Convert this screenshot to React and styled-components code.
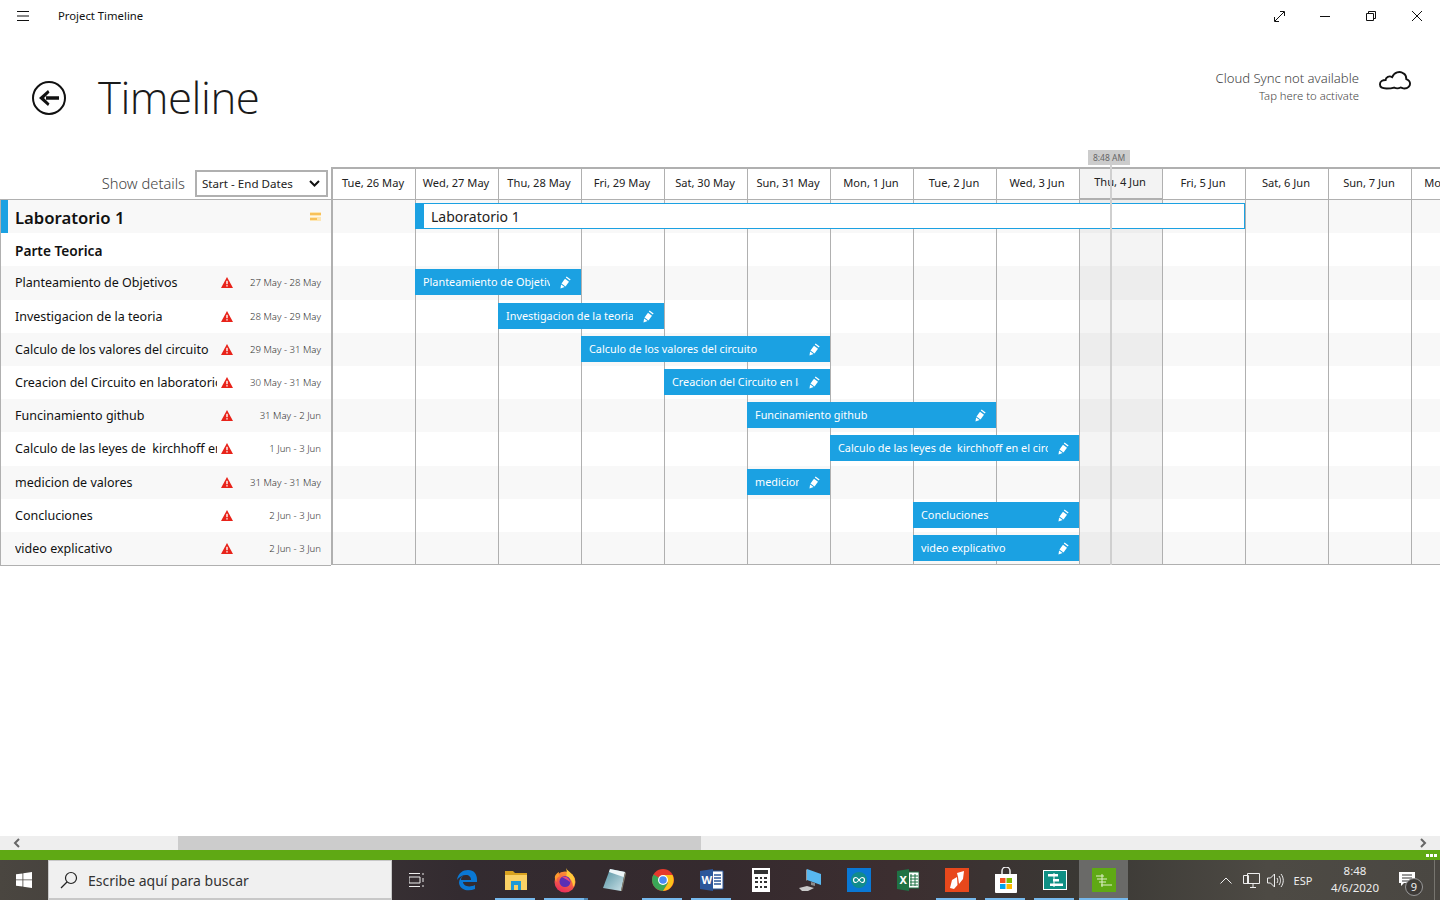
import React from "react";
import styled, { createGlobalStyle } from "styled-components";

const GlobalStyle = createGlobalStyle`
  html, body {
    margin: 0;
    padding: 0;
    width: 1440px;
    height: 900px;
    overflow: hidden;
    background: #fff;
    font-family: "Noto Sans", "Open Sans", sans-serif;
    color: #111;
  }
  * { box-sizing: border-box; }
`;

const DAYS = [
  "Tue, 26 May", "Wed, 27 May", "Thu, 28 May", "Fri, 29 May", "Sat, 30 May", "Sun, 31 May", "Mon, 1 Jun",
  "Tue, 2 Jun", "Wed, 3 Jun", "Thu, 4 Jun", "Fri, 5 Jun", "Sat, 6 Jun", "Sun, 7 Jun", "Mon, 8 Jun",
];
const TODAY = 9;
const ROW_H = 33.2;

const TASKS = [
  { name: "Planteamiento de Objetivos", dates: "27 May - 28 May", start: 1, span: 2 },
  { name: "Investigacion de la teoria", dates: "28 May - 29 May", start: 2, span: 2 },
  { name: "Calculo de los valores del circuito", dates: "29 May - 31 May", start: 3, span: 3 },
  { name: "Creacion del Circuito en laboratorio", dates: "30 May - 31 May", start: 4, span: 2 },
  { name: "Funcinamiento github", dates: "31 May - 2 Jun", start: 5, span: 3 },
  { name: "Calculo de las leyes de  kirchhoff en el circuito", dates: "1 Jun - 3 Jun", start: 6, span: 3 },
  { name: "medicion de valores", dates: "31 May - 31 May", start: 5, span: 1 },
  { name: "Concluciones", dates: "2 Jun - 3 Jun", start: 7, span: 2 },
  { name: "video explicativo", dates: "2 Jun - 3 Jun", start: 7, span: 2 },
];

const Page = styled.div`
  width: 1440px;
  height: 900px;
  display: flex;
  flex-direction: column;
  overflow: hidden;
`;

const TitleBar = styled.div`
  height: 32px;
  flex: none;
  display: flex;
  align-items: center;
  padding-left: 17px;
`;

const AppName = styled.div`
  margin-left: 29px;
  margin-top: -1px;
  font-size: 11.3px;
  color: #111;
`;

const WindowButtons = styled.div`
  margin-left: auto;
  display: flex;
`;

const WindowButton = styled.div`
  width: 46px;
  height: 32px;
  display: flex;
  align-items: center;
  justify-content: center;
`;

const Header = styled.div`
  height: 118px;
  flex: none;
  display: flex;
  align-items: flex-start;
  padding: 31px 29px 0 32px;
`;

const Title = styled.h1`
  margin: 0 0 0 32px;
  font-family: "Open Sans", sans-serif;
  font-weight: 300;
  font-size: 43.8px;
  line-height: 68px;
  color: #1a1a1a;
  letter-spacing: -0.5px;
`;

const Sync = styled.div`
  margin-left: auto;
  margin-top: 5px;
  display: flex;
  align-items: flex-start;
  gap: 20px;
`;

const SyncText = styled.div`
  text-align: right;
  font-weight: 300;
  color: #444;
  font-size: 13.1px;
  line-height: 20px;

  small {
    display: block;
    font-size: 11.3px;
    line-height: 16px;
  }
`;

const Gantt = styled.div`
  position: relative;
  display: flex;
  flex: none;
  height: 415px;
`;

const Side = styled.div`
  width: 331px;
  flex: none;
`;

const SideHead = styled.div`
  height: 50px;
  display: flex;
  align-items: flex-end;
  justify-content: flex-end;
  padding: 0 3px 2px 0;
  gap: 10px;
  border-bottom: 1px solid #b0b0b0;
`;

const ShowLabel = styled.div`
  font-size: 14.7px;
  font-weight: 300;
  color: #444;
  line-height: 26px;
  margin-bottom: 1px;
`;

const Select = styled.div`
  width: 133px;
  height: 27px;
  border: 2px solid #b0b0b0;
  display: flex;
  align-items: center;
  justify-content: space-between;
  padding: 0 6px 0 5px;
  font-size: 11.6px;
  color: #222;
`;

const SideRows = styled.div`
  border-left: 1px solid #b0b0b0;
  border-bottom: 1px solid #b0b0b0;
`;

const SideRow = styled.div`
  height: ${ROW_H}px;
  display: flex;
  align-items: center;
  padding-left: 14px;
  padding-right: 10px;
  background: ${(p) => (p.$shade ? "#f8f8f8" : "#fff")};
  border-left: ${(p) => (p.$accent ? "7px solid #1ba1e2" : "none")};
`;

const ProjectName = styled.div`
  font-size: 16.7px;
  font-weight: 600;
  flex: 1;
  margin-left: -7px;
  padding-top: 1px;
`;

const GroupName = styled.div`
  font-size: 13.7px;
  font-weight: 600;
  padding-top: 2px;
`;

const TaskName = styled.div`
  width: 202px;
  flex: none;
  font-size: 12.5px;
  white-space: pre;
  overflow: hidden;
`;

const Warn = styled.svg`
  width: 12px;
  height: 11px;
  flex: none;
  margin-left: 4px;
`;

const Dates = styled.div`
  flex: 1;
  text-align: right;
  font-size: 9.6px;
  font-weight: 300;
  color: #333;
  white-space: nowrap;
`;

const Timeline = styled.div`
  flex: 1;
  min-width: 0;
  overflow: hidden;
  margin-top: 17px;
`;

const Track = styled.div`
  width: 1163px;
  border-left: 1px solid #b0b0b0;
`;

const Columns = styled.div`
  display: grid;
  grid-template-columns: repeat(14, 83px);
  height: ${(p) => p.$height || ROW_H}px;
  background: ${(p) => (p.$shade ? "#f8f8f8" : "transparent")};
  border-bottom: ${(p) => (p.$last ? "1px solid #b0b0b0" : "none")};
`;

const HeadCell = styled.div`
  grid-row: 1;
  border-top: 2px solid #b0b0b0;
  border-left: 1px solid #b0b0b0;
  border-bottom: ${(p) => (p.$today ? "2px" : "1px")} solid #b0b0b0;
  background: ${(p) => (p.$today ? "#f3f3f3" : "#fff")};
  display: flex;
  align-items: center;
  justify-content: center;
  font-size: 11.1px;
  white-space: nowrap;
  overflow: hidden;
  color: #222;
  padding: 0 2px 4px 0;
`;

const Cell = styled.div`
  grid-row: 1;
  grid-column: ${(p) => p.$col};
  border-left: 1px solid #b0b0b0;
  background: ${(p) => (p.$today ? "rgba(0,0,0,0.045)" : "transparent")};
`;

const Bar = styled.div`
  grid-row: 1;
  grid-column: ${(p) => p.$start + 1} / span ${(p) => p.$span};
  z-index: 1;
  align-self: start;
  height: 26px;
  margin-top: 3px;
  background: #1ba1e2;
  color: #fff;
  font-size: 10.85px;
  display: flex;
  align-items: center;
  padding: 0 9px 0 8px;
  gap: 10px;
`;

const BarText = styled.div`
  flex: 1;
  overflow: hidden;
  white-space: pre;
  min-width: 0;
  margin-top: -1px;
`;

const SummaryBar = styled.div`
  grid-row: 1;
  grid-column: 2 / span 10;
  z-index: 1;
  align-self: start;
  margin-top: 3px;
  height: 26px;
  border: 1px solid #1ba1e2;
  border-left: 9px solid #1ba1e2;
  background: #fff;
  font-size: 14px;
  line-height: 25px;
  padding-left: 7px;
  color: #222;
`;

const NowTag = styled.div`
  position: absolute;
  left: 1088px;
  top: 0;
  width: 42px;
  height: 15px;
  background: #cccccc;
  color: #666;
  font-size: 8.5px;
  line-height: 15px;
  text-align: center;
`;

const NowLine = styled.div`
  position: absolute;
  left: 1110px;
  top: 15px;
  bottom: 0;
  width: 2px;
  background: #cfcfcf;
  z-index: 2;
`;

const Spacer = styled.div`
  flex: 1;
`;

const ScrollBar = styled.div`
  height: 14px;
  flex: none;
  background: #eeeeee;
  display: flex;
  align-items: center;
  padding: 0 12px;
`;

const ScrollThumb = styled.div`
  width: 523px;
  height: 14px;
  margin-left: 156px;
  background: #cccccc;
`;

const Arrow = styled.svg`
  width: 10px;
  height: 10px;
  flex: none;
`;

const GreenStrip = styled.div`
  height: 10px;
  flex: none;
  background: #5fa914;
  display: flex;
  justify-content: flex-end;
  align-items: center;
  padding-right: 3px;
  gap: 1px;
`;

const Dot = styled.span`
  width: 3px;
  height: 3px;
  background: #fff;
`;

const Taskbar = styled.div`
  height: 40px;
  flex: none;
  display: flex;
  align-items: stretch;
  background: linear-gradient(90deg, #4a4640 0%, #332b30 32%, #352a2e 50%, #3c2e30 62%, #3a3834 75%, #4d4a44 88%, #4a4742 100%);
  color: #eee;
`;

const StartButton = styled.div`
  width: 48px;
  flex: none;
  display: flex;
  align-items: center;
  justify-content: center;
`;

const SearchBox = styled.div`
  width: 344px;
  flex: none;
  background: #f0f0f0;
  border: 1px solid #c8c8c8;
  border-width: 1px 1px 2px 1px;
  display: flex;
  align-items: center;
  gap: 10px;
  padding-left: 11px;
  color: #333;
  font-size: 14px;
`;

const SearchLabel = styled.span`
  padding-top: 2px;
`;

const TaskIcons = styled.div`
  display: flex;
  margin-left: 1px;
`;

const TaskIcon = styled.div`
  position: relative;
  width: 49px;
  display: flex;
  align-items: center;
  justify-content: center;
  background: ${(p) => (p.$active ? "#6a6a68" : "transparent")};

  &::after {
    content: "";
    display: ${(p) => (p.$open ? "block" : "none")};
    position: absolute;
    bottom: 0;
    left: ${(p) => (p.$active ? "0" : "4px")};
    width: ${(p) => (p.$active ? "100%" : p.$stacked ? "44px" : "40px")};
    height: 2px;
    background: ${(p) =>
      p.$stacked ? "linear-gradient(90deg, #76b9ed 90%, #4d86b3 90%)" : "#76b9ed"};
  }
`;

const Tray = styled.div`
  margin-left: auto;
  display: flex;
  align-items: center;
  font-size: 11px;
  color: #eee;
`;

const TrayIcon = styled.div`
  display: flex;
  align-items: center;
  justify-content: center;
  width: ${(p) => p.$w}px;
`;

const Clock = styled.div`
  width: 70px;
  margin-top: -2px;
  text-align: center;
  font-size: 11.5px;
  line-height: 17.5px;
  white-space: nowrap;
`;

const Notify = styled.div`
  position: relative;
  width: 50px;
  align-self: stretch;
  padding: 12px 0 0 9px;

  &::after {
    content: "";
    position: absolute;
    top: 0;
    bottom: 0;
    right: 5px;
    width: 1px;
    background: #77756f;
  }
`;

const Badge = styled.div`
  position: absolute;
  left: 15px;
  top: 18px;
  width: 18px;
  height: 18px;
  border-radius: 50%;
  border: 1px solid #999;
  background: #3d3a37;
  font-size: 11px;
  line-height: 16px;
  text-align: center;
  color: #eee;
`;

const Pencil = () => (
  <svg width="12" height="14" viewBox="0 0 12 14" style={{ flex: "none" }}>
    <path d="M1.500 8.500 5 3.700l4 3-3.500 4.800z" fill="#fff" />
    <path d="M5.800 2.500 6.600 1.500l4 3-.8 1z" fill="#fff" />
    <path d="M1.100 9.500 4.600 12 .5 13.500z" fill="#fff" />
  </svg>
);

const WarnIcon = () => (
  <Warn viewBox="0 0 12 11">
    <path d="M6 0 12 11H0z" fill="#e8231a" />
    <rect x="5.300" y="3.800" width="1.400" height="3.400" fill="#fff" />
    <rect x="5.300" y="8.200" width="1.400" height="1.300" fill="#fff" />
  </Warn>
);

const Icons = {
  cortana: (
    <svg width="18" height="16" viewBox="2 0 18 16" fill="none" stroke="#eee" strokeWidth="1">
      <path d="M2 1.500h11M2 14.500h11M2 5h11v6H2zM16 1v2M16 6v4M16 13v2" />
    </svg>
  ),
  edge: (
    <svg width="22" height="22" viewBox="0 0 22 22">
      <path d="M1 11C2 4 7 1 12 1c6 0 9 4 9 10v2H7c.3 4 6 6 12 3v4c-7 3-15 1-16-6 0-3 1.500-6 5-8-2 1.500-3 3-3 5h10c0-3-2-5-5-5-4 0-7 2-9 5z" fill="#0a78d4" />
    </svg>
  ),
  folder: (
    <svg width="22" height="20" viewBox="0 0 22 20">
      <path d="M0 1h8l2 2h12v3H0z" fill="#d9a21f" />
      <path d="M0 5h22v15H0z" fill="#fad165" />
      <path d="M6 11h10v9H6z" fill="#1f9ad6" />
      <path d="M9 15h4v5H9z" fill="#fad165" />
    </svg>
  ),
  firefox: (
    <svg width="24" height="25" viewBox="0 0 24 25">
      <defs>
        <linearGradient id="fx" x1="0.700" y1="0" x2="0.300" y2="1">
          <stop offset="0" stopColor="#ff9a2e" />
          <stop offset="1" stopColor="#e8285f" />
        </linearGradient>
      </defs>
      <circle cx="12" cy="14" r="10.500" fill="url(#fx)" />
      <path d="M13 0c2 4 9 6 9 14 0 2-1 4-2 5 0-5-2-9-7-10 1-3 1-6 0-9z" fill="#ffc93a" />
      <path d="M2 8c1-2 2-3 4-4-.5 2 0 3 1 4-3 1-4 3-3.500 6C2 12 1.500 10 2 8z" fill="#ff9a2e" />
      <circle cx="12" cy="13.500" r="5.500" fill="#5a2fb5" />
      <path d="M9 9c4-1 8 1 8 5-2-2-5-3-8-5z" fill="#e9457f" />
    </svg>
  ),
  notes: (
    <svg width="24" height="24" viewBox="0 0 24 24">
      <defs>
        <linearGradient id="nt" x1="0" y1="0" x2="1" y2="1">
          <stop offset="0" stopColor="#4f8f9f" />
          <stop offset="1" stopColor="#cfe4ea" />
        </linearGradient>
      </defs>
      <path d="M8 1l15 3-4 19L1 20z" fill="url(#nt)" />
      <path d="M8 1l15 3-1.500 5L7 4z" fill="#eef6f8" />
      <path d="M23 4l-4 19 1 0 4-18z" fill="#8a8474" />
    </svg>
  ),
  chrome: (
    <svg width="22" height="24" viewBox="0 0 22 22">
      <circle cx="11" cy="11" r="11" fill="#e5392d" />
      <path d="M11 11 1.500 5.500A11 11 0 0 0 11 22l5-8z" fill="#3aa757" />
      <path d="M11 6h9.500A11 11 0 0 1 11 22l5-8z" fill="#fbc21a" />
      <circle cx="11" cy="11" r="5" fill="#fff" />
      <circle cx="11" cy="11" r="3.800" fill="#4a8af4" />
    </svg>
  ),
  word: (
    <svg width="24" height="22" viewBox="0 0 24 22">
      <path d="M8 2h15v18H8z" fill="#fff" stroke="#2b579a" />
      <path d="M14 6h7M14 9h7M14 12h7M14 15h7" stroke="#2b579a" strokeWidth="1.500" />
      <path d="M0 2l13-2v22L0 20z" fill="#2b579a" />
      <text x="1.500" y="15" fontSize="11" fontWeight="700" fill="#fff" fontFamily="Noto Sans">W</text>
    </svg>
  ),
  calc: (
    <svg width="18" height="24" viewBox="0 0 18 24">
      <path d="M0 0h18v24H0z" fill="#fff" />
      <path d="M2 2h14v4H2z" fill="#333" />
      <path d="M3 9h3v2H3zM8 9h2v2H8zM12 9h3v2h-3zM3 13h3v2H3zM8 13h2v2H8zM12 13h3v2h-3zM3 18h3v2H3zM8 18h2v2H8zM12 18h3v2h-3z" fill="#333" />
    </svg>
  ),
  pc: (
    <svg width="24" height="24" viewBox="0 0 24 24">
      <path d="M9 1l14 5v11L9 12z" fill="#58b8f0" />
      <path d="M9 1 8 2v11l1-1z" fill="#9a9a9a" />
      <path d="M13 14l4 1v3l-4-1z" fill="#8a8a8a" />
      <path d="M1 20l8-2 7 2-6 3H4z" fill="#c9c9c9" />
    </svg>
  ),
  arduino: (
    <svg width="24" height="24" viewBox="0 0 24 24">
      <path d="M0 0h24v24H0z" fill="#0a78d4" />
      <circle cx="12" cy="12" r="8" fill="#128c8c" />
      <path d="M9 9.500a2.500 2.500 0 1 0 0 5c2 0 4-5 6-5a2.500 2.500 0 1 1 0 5c-2 0-4-5-6-5z" fill="none" stroke="#fff" strokeWidth="1.200" />
    </svg>
  ),
  excel: (
    <svg width="22" height="22" viewBox="0 0 22 22">
      <path d="M8 3h14v16H8z" fill="#fff" stroke="#1f7244" />
      <path d="M14 5v12M18 5v12M13 7h8M13 10h8M13 13h8M13 16h8" stroke="#1f7244" />
      <path d="M0 2l12-2v22L0 20z" fill="#1f7244" />
      <text x="2.500" y="15" fontSize="11" fontWeight="700" fill="#fff" fontFamily="Noto Sans">X</text>
    </svg>
  ),
  acrobat: (
    <svg width="24" height="24" viewBox="0 0 24 24">
      <path d="M0 0h24v24H0z" fill="#e8481c" />
      <path d="M5 20l2-8 5-3 .5 8-3.500 4z" fill="#fff" />
      <path d="M12 5l7-2-1 8-4 5-1-7z" fill="#fff" />
    </svg>
  ),
  store: (
    <svg width="24" height="26" viewBox="0 0 24 26">
      <path d="M8 7V4a4 4 0 0 1 8 0v3" fill="none" stroke="#eee" strokeWidth="1.500" />
      <path d="M1 7h22v18a1 1 0 0 1-1 1H2a1 1 0 0 1-1-1z" fill="#fff" />
      <path d="M6 11h5.500v5H6z" fill="#f25022" />
      <path d="M12.500 11H18v5h-5.500z" fill="#7fba00" />
      <path d="M6 17h5.500v5H6z" fill="#00a4ef" />
      <path d="M12.500 17H18v5h-5.500z" fill="#ffb900" />
    </svg>
  ),
  project: (
    <svg width="24" height="20" viewBox="0 0 24 20">
      <path d="M0 0h24v20H0z" fill="#fff" />
      <path d="M1 1h22v18H1z" fill="#0f8f84" />
      <path d="M5 4h10v2.500H5zM10 9h6v2.500h-6zM7 13.500h13V16H7z" fill="#fff" />
      <path d="M11 3v14" stroke="#fff" />
    </svg>
  ),
  timeline: (
    <svg width="24" height="24" viewBox="0 0 24 24">
      <path d="M0 0h24v24H0z" fill="#5fa914" />
      <path d="M4 8h8M5 11h10M7 14h7M9 17h11" stroke="#dff0c8" strokeWidth="1.200" />
      <path d="M10 6v13" stroke="#dff0c8" />
    </svg>
  ),
};

const TASK_ICONS = [
  { key: "cortana" },
  { key: "edge" },
  { key: "folder", open: true },
  { key: "firefox", open: true, stacked: true },
  { key: "notes" },
  { key: "chrome", open: true },
  { key: "word", open: true },
  { key: "calc" },
  { key: "pc" },
  { key: "arduino" },
  { key: "excel" },
  { key: "acrobat", open: true },
  { key: "store", open: true },
  { key: "project", open: true },
  { key: "timeline", open: true, active: true },
];

const DayCells = () =>
  DAYS.map((d, i) => <Cell key={d} $today={i === TODAY} $col={i + 1} />);

export default function App() {
  return (
    <Page>
      <GlobalStyle />
      <TitleBar>
        <svg width="12" height="10" viewBox="0 0 12 10" stroke="#111" strokeWidth="1">
          <path d="M0 .5h12M0 5h12M0 9.500h12" />
        </svg>
        <AppName>Project Timeline</AppName>
        <WindowButtons>
          <WindowButton>
            <svg width="11" height="11" viewBox="0 0 11 11" fill="none" stroke="#111">
              <path d="M1 10 10 1M6 .5h4.500V5M.5 6v4.500H5" />
            </svg>
          </WindowButton>
          <WindowButton>
            <svg width="10" height="1" viewBox="0 0 10 1"><path d="M0 0h10v1H0z" fill="#111" /></svg>
          </WindowButton>
          <WindowButton>
            <svg width="10" height="10" viewBox="0 0 10 10" fill="none" stroke="#111">
              <path d="M.5 2.500h7v7h-7zM2.500 2.500v-2h7v7h-2" />
            </svg>
          </WindowButton>
          <WindowButton>
            <svg width="10" height="10" viewBox="0 0 10 10" stroke="#111"><path d="M0 0l10 10M10 0 0 10" /></svg>
          </WindowButton>
        </WindowButtons>
      </TitleBar>

      <Header>
        <svg width="34" height="34" viewBox="0 0 34 34" style={{ marginTop: 18, flex: "none" }}>
          <circle cx="17" cy="17" r="16" fill="none" stroke="#111" strokeWidth="2" />
          <path d="M14 17h13" stroke="#111" strokeWidth="3.500" />
          <path d="M7 17l9-8 1.500 2.500L12 17l5.500 5.500L16 25z" fill="#111" />
        </svg>
        <Title>Timeline</Title>
        <Sync>
          <SyncText>
            Cloud Sync not available
            <small>Tap here to activate</small>
          </SyncText>
          <svg width="32" height="24" viewBox="0 0 34 24" fill="none" stroke="#111" strokeWidth="2">
            <path d="M8 21c-4 0-7-1.500-7-4.500S4 12 7 12c0-3 4-5 7-3 2-5 8-7 12-4 2 1 3 3 3 6 3 1 4 3 4 5s-2 5-6 5c-2 0-3-1-4-1-2 1-5 1-7 0-3 1-5 1-8 1z" />
          </svg>
        </Sync>
      </Header>

      <Gantt>
        <Side>
          <SideHead>
            <ShowLabel>Show details</ShowLabel>
            <Select>
              Start - End Dates
              <svg width="11" height="7" viewBox="0 0 11 7" fill="none" stroke="#111" strokeWidth="2"><path d="M1 1l4.500 4.500L10 1" /></svg>
            </Select>
          </SideHead>
          <SideRows>
            <SideRow $shade $accent>
              <ProjectName>Laboratorio 1</ProjectName>
              <svg width="11" height="9" viewBox="0 0 11 9">
                <path d="M0 0h11v9H0z" fill="#fde6b4" />
                <path d="M0 1h11v2H0z" fill="#f8c15a" />
                <path d="M0 4h11v1H0z" fill="#fff7e6" />
                <path d="M0 6h7v2H0z" fill="#f8c15a" />
              </svg>
            </SideRow>
            <SideRow><GroupName>Parte Teorica</GroupName></SideRow>
            {TASKS.map((t, i) => (
              <SideRow key={t.name} $shade={i % 2 === 0}>
                <TaskName>{t.name}</TaskName>
                <WarnIcon />
                <Dates>{t.dates}</Dates>
              </SideRow>
            ))}
          </SideRows>
        </Side>
        <Timeline>
          <Track>
            <Columns $height={33}>
              {DAYS.map((d, i) => (
                <HeadCell key={d} $today={i === TODAY}>{d}</HeadCell>
              ))}
            </Columns>
            <Columns $shade>
              <DayCells />
              <SummaryBar>Laboratorio 1</SummaryBar>
            </Columns>
            <Columns>
              <DayCells />
            </Columns>
            {TASKS.map((t, i) => (
              <Columns key={t.name} $shade={i % 2 === 0} $last={i === TASKS.length - 1}>
                <DayCells />
                <Bar $start={t.start} $span={t.span}>
                  <BarText>{t.name}</BarText>
                  <Pencil />
                </Bar>
              </Columns>
            ))}
          </Track>
        </Timeline>
        <NowTag>8:48 AM</NowTag>
        <NowLine />
      </Gantt>

      <Spacer />
      <ScrollBar>
        <Arrow viewBox="0 0 10 10" fill="none" stroke="#666" strokeWidth="2"><path d="M7 1 3 5l4 4" /></Arrow>
        <ScrollThumb />
        <Spacer />
        <Arrow viewBox="0 0 10 10" fill="none" stroke="#666" strokeWidth="2"><path d="M3 1l4 4-4 4" /></Arrow>
      </ScrollBar>
      <GreenStrip>
        <Dot /><Dot /><Dot />
      </GreenStrip>
      <Taskbar>
        <StartButton>
          <svg width="16" height="16" viewBox="0 0 16 16" fill="#fff">
            <path d="M0 2.300 6.500 1.400v6.100H0zM7.300 1.300 16 0v7.500H7.300zM0 8.300h6.500v6.300L0 13.700zM7.300 8.300H16V16l-8.700-1.300z" />
          </svg>
        </StartButton>
        <SearchBox>
          <svg width="18" height="18" viewBox="0 0 18 18" fill="none" stroke="#222" strokeWidth="1.200">
            <circle cx="11" cy="7" r="5.500" />
            <path d="M7 11 1 17" />
          </svg>
          <SearchLabel>Escribe aquí para buscar</SearchLabel>
        </SearchBox>
        <TaskIcons>
          {TASK_ICONS.map((t) => (
            <TaskIcon key={t.key} $open={t.open} $active={t.active} $stacked={t.stacked}>{Icons[t.key]}</TaskIcon>
          ))}
        </TaskIcons>
        <Tray>
          <TrayIcon $w={24}>
            <svg width="12" height="7" viewBox="0 0 12 7" fill="none" stroke="#eee"><path d="M.5 6.500 6 1l5.500 5.500" /></svg>
          </TrayIcon>
          <TrayIcon $w={26}>
            <svg width="17" height="15" viewBox="0 0 17 15" fill="none" stroke="#eee">
              <path d="M4.500.5h12v10h-12zM.5 2.500h5v8h-5zM10 10.500v4M7 14.500h6" />
            </svg>
          </TrayIcon>
          <TrayIcon $w={22}>
            <svg width="17" height="15" viewBox="0 0 17 15" fill="none" stroke="#eee">
              <path d="M.5 5h3l4-4v13l-4-4h-3zM10 5c1 1.500 1 3.500 0 5M12 3c2 3 2 6 0 9M14 1c3 4 3 9 0 13" />
            </svg>
          </TrayIcon>
          <TrayIcon $w={34}>ESP</TrayIcon>
          <Clock>8:48<br />4/6/2020</Clock>
          <Notify>
            <svg width="16" height="14" viewBox="0 0 16 14">
              <path d="M0 0h16v11H5l-3 3v-3H0z" fill="#fff" />
              <path d="M3 3h10M3 6h10M3 9h7" stroke="#333" />
            </svg>
            <Badge>9</Badge>
          </Notify>
        </Tray>
      </Taskbar>
    </Page>
  );
}
